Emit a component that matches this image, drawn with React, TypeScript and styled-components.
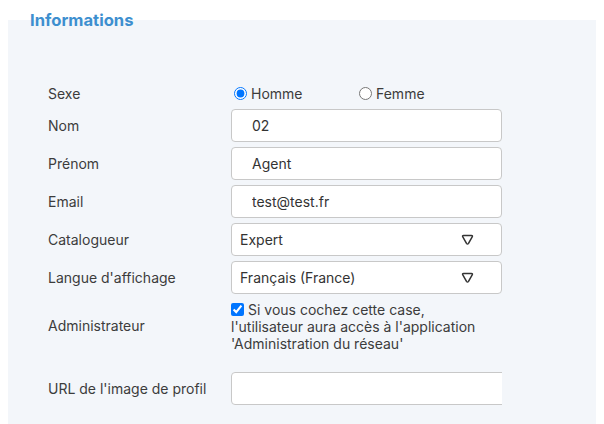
import React from "react";
import styled, { createGlobalStyle } from "styled-components";

const GlobalStyle = createGlobalStyle`
  body {
    margin: 10px 8px 0 8px;
    background: #ffffff;
    font-family: Inter, "Noto Sans", sans-serif;
    color: #3c3c3c;
  }
`;

const Panel = styled.fieldset`
  margin: 0;
  border: none;
  padding: 0 20px 20px 20px;
  background: #f3f6fa;
  min-height: 410px;
`;

const Legend = styled.legend`
  padding: 0 2px;
  font-size: 16.6px;
  font-weight: 700;
  color: #3d8fcf;
`;

const Form = styled.div`
  display: grid;
  grid-template-columns: 183px 271px;
  row-gap: 5px;
  padding: 52px 0 0 20px;
  align-items: center;
`;

const Label = styled.label<{ $gapAfter?: number }>`
  font-size: 14px;
  color: #3c3c3c;
  margin-bottom: ${(p) => p.$gapAfter ?? 0}px;
`;

const Field = styled.div<{ $gapAfter?: number }>`
  min-height: 22px;
  display: flex;
  align-items: center;
  margin-bottom: ${(p) => p.$gapAfter ?? 0}px;
`;

const RadioOption = styled.label`
  width: 125px;
  display: flex;
  align-items: center;
  font-size: 14px;
  color: #3c3c3c;

  input {
    margin: 0 4px 0 3px;
    width: 13px;
    height: 13px;
  }
`;

const TextInput = styled.input`
  box-sizing: border-box;
  width: 100%;
  height: 33px;
  padding: 0 20px;
  border: 1px solid #c8c8c8;
  border-radius: 4px;
  background: #ffffff;
  font-family: inherit;
  font-size: 14px;
  color: #333333;
  outline: none;
`;

const Clip = styled.div`
  width: 100%;
  overflow: hidden;

  ${TextInput} {
    width: 110%;
  }
`;

const SelectBox = styled.div`
  box-sizing: border-box;
  width: 100%;
  height: 33px;
  padding: 0 27px 0 8px;
  border: 1px solid #c8c8c8;
  border-radius: 4px;
  background: #ffffff;
  display: flex;
  align-items: center;
  justify-content: space-between;
  font-size: 14px;
  color: #333333;
`;

const Check = styled.div`
  max-width: 262px;
  padding-top: 2px;
  font-size: 14px;
  line-height: 17px;
  color: #3c3c3c;

  input {
    margin: 0 4px 0 0;
    width: 13px;
    height: 13px;
    vertical-align: -1px;
  }
`;

// rounded down-pointing triangle used as the dropdown caret
const Arrow = () => (
  <svg width="13" height="12" viewBox="0 0 13 12">
    <path
      d="M2.6 1.5 H10.4 Q12 1.5 11.2 2.9 L7.5 9.3 Q6.5 10.9 5.5 9.3 L1.8 2.9 Q1 1.5 2.6 1.5 Z"
      fill="none"
      stroke="#333"
      strokeWidth="1.5"
      strokeLinejoin="round"
    />
  </svg>
);

const Select = ({ value }: { value: string }) => (
  <SelectBox>
    <span>{value}</span>
    <Arrow />
  </SelectBox>
);

export default function App() {
  return (
    <>
      <GlobalStyle />
      <Panel>
        <Legend>Informations</Legend>
        <Form>
          <Label>Sexe</Label>
          <Field>
            <RadioOption>
              <input type="radio" name="sexe" defaultChecked />
              Homme
            </RadioOption>
            <RadioOption>
              <input type="radio" name="sexe" />
              Femme
            </RadioOption>
          </Field>

          <Label>Nom</Label>
          <TextInput defaultValue="02" />

          <Label>Prénom</Label>
          <TextInput defaultValue="Agent" />

          <Label>Email</Label>
          <TextInput defaultValue="test@test.fr" />

          <Label>Catalogueur</Label>
          <Select value="Expert" />

          <Label>Langue d'affichage</Label>
          <Select value="Français (France)" />

          <Label $gapAfter={15}>Administrateur</Label>
          <Field $gapAfter={15}>
            <Check>
              <input type="checkbox" defaultChecked />
              Si vous cochez cette case, l'utilisateur aura accès à l'application
              'Administration du réseau'
            </Check>
          </Field>

          <Label>URL de l'image de profil</Label>
          <Clip>
            <TextInput />
          </Clip>
        </Form>
      </Panel>
    </>
  );
}
